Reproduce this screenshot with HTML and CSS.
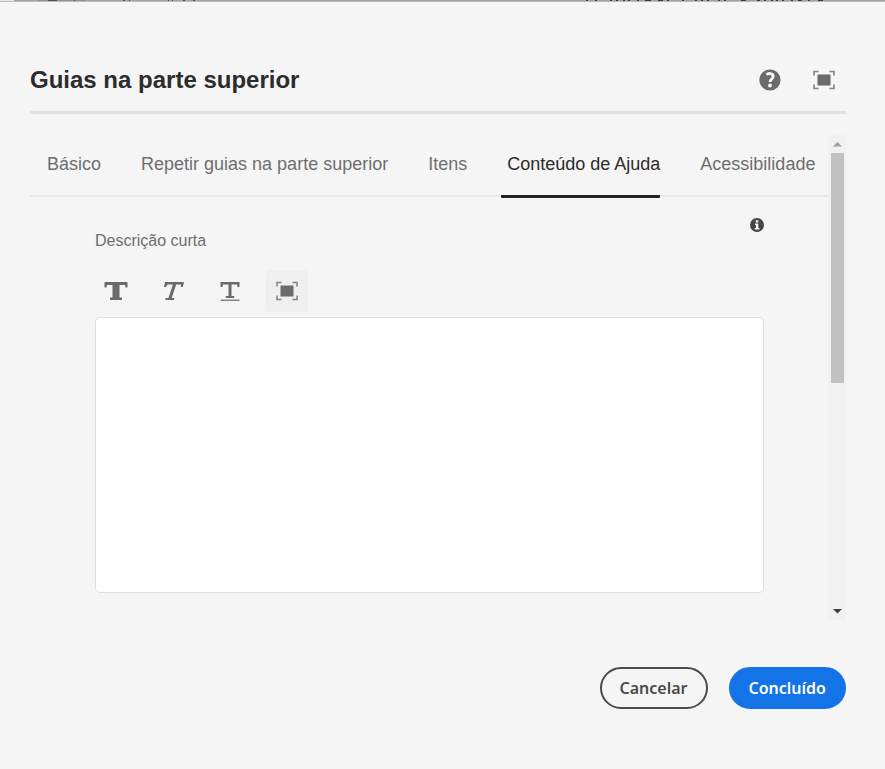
FILE: index.html
```html
<!DOCTYPE html>
<html lang="pt-BR">
<head>
<meta charset="utf-8">
<title>Guias na parte superior</title>
<link rel="stylesheet" href="styles.css">
</head>
<body>
<svg class="backdrop" aria-hidden="true" height="1">
  <path stroke="#e8e8e8" d="M0 .5h14"/>
  <path stroke="#909090" d="M38 .5h48"/>
  <path stroke="#505050" d="M48 .5h9M74 .5h1M123 .5h2M129 .5h1M168 .5h1M172 .5h1M183 .5h2M193 .5h2"/>
  <path stroke="#333a48" d="M586 .5h2M595 .5h2M610 .5h2M616 .5h2M623 .5h2M628 .5h2M637 .5h2M645 .5h6M658 .5h5M667 .5h2M682 .5h2M695 .5h2M701 .5h2M707 .5h2M718 .5h2M724 .5h2M741 .5h5M757 .5h3M764 .5h2M771 .5h2M776 .5h2M782 .5h2M791 .5h2M798 .5h4M808 .5h2M818 .5h5"/>
</svg>
<main class="dialog">
  <header class="header">
    <h1 class="title">Guias na parte superior</h1>
    <button class="icon-button" type="button" aria-label="Ajuda">
      <svg width="22" height="22" viewBox="0 0 22 22"><circle cx="11" cy="11" r="10.6" fill="#6b6b6b"/><path d="M7.600 5.800C9.400 3.900 14.100 4 14.100 7.400c0 2.500-3 2.700-3 5.500" fill="none" stroke="#f5f5f5" stroke-width="3"/><circle cx="11" cy="16.500" r="2" fill="#f5f5f5"/></svg>
    </button>
    <button class="icon-button" type="button" aria-label="Tela cheia">
      <svg width="22" height="20" viewBox="0 0 22 20"><path fill="#6b6b6b" d="M4.500 4.500h13v11h-13z"/><path d="M1 5.500V1.500h4.500M16.500 1.500H21v4M21 14.500v4h-4.500M5.500 18.500H1v-4" fill="none" stroke="#858585" stroke-width="1.600"/></svg>
    </button>
  </header>
  <div class="body">
    <div class="content">
      <nav class="tabs" role="tablist">
        <button class="tab" role="tab" type="button">Básico</button>
        <button class="tab" role="tab" type="button">Repetir guias na parte superior</button>
        <button class="tab" role="tab" type="button">Itens</button>
        <button class="tab tab-active" role="tab" type="button" aria-selected="true">Conteúdo de Ajuda</button>
        <button class="tab" role="tab" type="button">Acessibilidade</button>
      </nav>
      <section class="panel">
        <div class="field-head">
          <label class="label" for="short">Descrição curta</label>
          <button class="info" type="button" aria-label="Informações">
            <svg width="14" height="14" viewBox="0 0 14 14"><circle cx="7" cy="7" r="7" fill="#464646"/><path fill="#f5f5f5" d="M5.800 2.200h2.500v2.200H5.800zM5 5.500h3.300v4.400h1.100v1.500H4.800V9.900h1.100V7H5z"/></svg>
          </button>
        </div>
        <div class="toolbar">
          <button class="tool" type="button" aria-label="Negrito">
            <svg width="24" height="20" viewBox="0 0 24 20"><path fill="#6b6b6b" d="M.5 1h23v5.500h-2L21 4h-5.500v12.500H18V19H6v-2.500h2.500V4H3l-.5 2.500h-2z"/></svg>
          </button>
          <button class="tool" type="button" aria-label="Itálico">
            <svg width="24" height="20" viewBox="0 0 24 20"><path fill="#6b6b6b" d="M4 1h19l-1.200 5h-1.900l.1-2.500h-4.800L10.700 17h2.700l-.5 2H4.200l.5-2h2.700l4.500-13.500H6.500L5 6H3z"/></svg>
          </button>
          <button class="tool" type="button" aria-label="Sublinhado">
            <svg width="24" height="20" viewBox="0 0 24 20"><path fill="#6b6b6b" d="M2.500 1h19v5h-2l-.4-2.500h-5.600v11.400h2.700V17H7.800v-2.100h2.700V3.500H4.900L4.500 6h-2z"/><path fill="#858585" d="M2.500 18.500h19V20h-19z"/></svg>
          </button>
          <button class="tool tool-active" type="button" aria-label="Tela cheia">
            <svg width="22" height="20" viewBox="0 0 22 20"><path fill="#6b6b6b" d="M4.500 4.500h13v11h-13z"/><path d="M1 5.500V1.500h4.500M16.500 1.500H21v4M21 14.500v4h-4.500M5.500 18.500H1v-4" fill="none" stroke="#858585" stroke-width="1.600"/></svg>
          </button>
        </div>
        <textarea class="editor" id="short"></textarea>
      </section>
    </div>
    <div class="scrollbar" aria-hidden="true">
      <svg width="18" height="18" viewBox="0 0 18 18"><path fill="#a0a0a0" d="M5 11.500L9.500 7l4.500 4.500z"/></svg>
      <div class="thumb"></div>
      <svg class="down" width="18" height="18" viewBox="0 0 18 18"><path fill="#404040" d="M5 7l4.500 4.500L14 7z"/></svg>
    </div>
  </div>
  <footer class="footer">
    <button class="button" type="button">Cancelar</button>
    <button class="button button-primary" type="button">Concluído</button>
  </footer>
</main>
</body>
</html>
```
FILE: styles.css
```css
* {
  box-sizing: border-box;
}

body {
  margin: 0;
  background: #f5f5f5;
  font-family: "Liberation Sans", Arial, sans-serif;
  color: #6e6e6e;
}

button {
  margin: 0;
  padding: 0;
  border: 0;
  background: none;
  font: inherit;
  color: inherit;
  cursor: pointer;
}

svg {
  display: block;
}

.backdrop {
  width: 100%;
  background: #a3a3a3;
}

.dialog {
  padding: 0 39px 32px 30px;
  border-top: 1px solid #bcbcbc;
}

.header {
  display: flex;
  align-items: center;
  gap: 32px;
  height: 112px;
  padding: 46px 11px 0 0;
  border-bottom: 3px solid #e0e0e0;
}

.title {
  flex: 1;
  margin: 0;
  font-size: 24px;
  line-height: 32px;
  color: #2c2c2c;
}

.body {
  display: flex;
  margin-top: 21px;
}

.content {
  flex: 1;
  min-width: 0;
}

.tabs {
  display: flex;
  gap: 34px;
  padding-left: 11px;
  border-bottom: 2px solid #e8e8e8;
}

.tab {
  height: 60px;
  padding: 0 0 2px 6px;
  font-size: 18px;
  line-height: 24px;
  white-space: nowrap;
}

.tab-active {
  height: 63px;
  margin-bottom: -3px;
  border-bottom: 3px solid #222;
  border-radius: 1px;
  color: #2c2c2c;
}

.panel {
  padding: 21px 64px 27px 65px;
}

.field-head {
  display: flex;
  justify-content: space-between;
  align-items: flex-start;
}

.label {
  padding-top: 13px;
  font-size: 16px;
  line-height: 20px;
}

.toolbar {
  display: flex;
  gap: 15px;
  margin: 19px 0 5px;
}

.tool {
  display: grid;
  place-items: center;
  width: 42px;
  height: 42px;
  border-radius: 4px;
}

.tool-active {
  background: #efefef;
}

.editor {
  display: block;
  width: 100%;
  height: 276px;
  padding: 12px;
  border: 1px solid #dedede;
  border-radius: 5px;
  background: #fff;
  font: inherit;
  resize: none;
}

.scrollbar {
  display: flex;
  flex-direction: column;
  width: 18px;
  background: #f1f1f1;
}

.thumb {
  height: 230px;
  margin: 0 2px 0 3px;
  background: #c1c1c1;
}

.down {
  margin-top: auto;
}

.footer {
  display: flex;
  justify-content: flex-end;
  gap: 21px;
  margin-top: 47px;
}

.button {
  height: 42px;
  padding: 0 18px;
  border: 2px solid #4b4b4b;
  border-radius: 21px;
  font-family: "Noto Sans", "Open Sans", sans-serif;
  font-size: 16px;
  font-weight: 600;
  color: #4b4b4b;
}

.button-primary {
  border-color: #1473e6;
  background: #1473e6;
  color: #fff;
}
```
